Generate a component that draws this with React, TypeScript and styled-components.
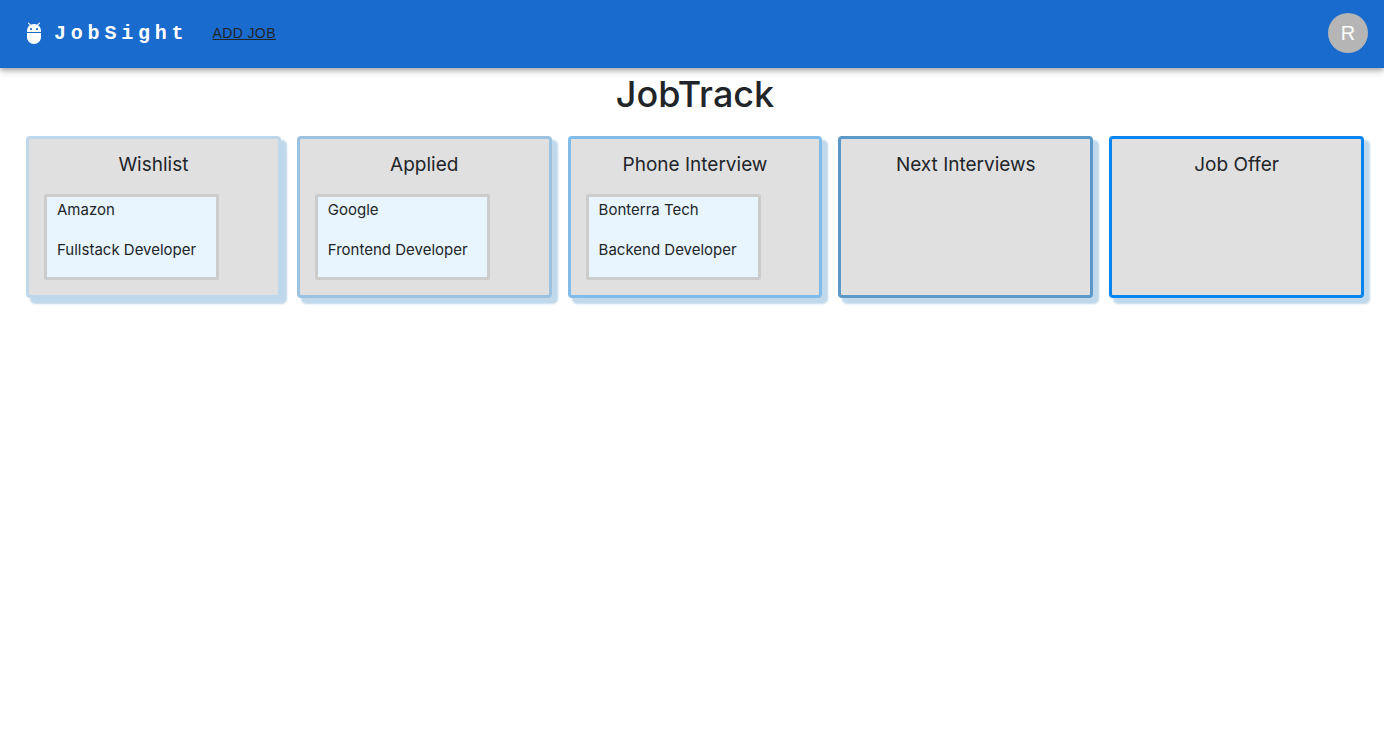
import React from "react";
import styled, { createGlobalStyle } from "styled-components";

const GlobalStyle = createGlobalStyle`
  *, *::before, *::after { box-sizing: border-box; }
  body {
    margin: 0;
    background: #fff;
    color: #212529;
    font-family: Inter, "Liberation Sans", sans-serif;
    font-size: 15px;
    line-height: 24px;
  }
`;

const AppBar = styled.header`
  position: relative;
  display: flex;
  align-items: center;
  height: 68px;
  padding: 0 16px 2px 22px;
  background: #196bcd;
  box-shadow: 0 2px 4px -1px rgba(0, 0, 0, 0.2), 0 4px 5px rgba(0, 0, 0, 0.14),
    0 1px 10px rgba(0, 0, 0, 0.12);
`;

const Brand = styled.a`
  display: flex;
  align-items: center;
  gap: 8px;
  color: #fff;
  font: 700 20px/32px "Liberation Mono", monospace;
  letter-spacing: 0.24em;
  text-decoration: none;
`;

const BrandName = styled.span`
  padding-top: 2px;
`;

const Nav = styled.nav`
  margin-left: 24px;
`;

const NavLink = styled.a`
  color: #212529;
  font: 400 14px/24px "Liberation Sans", sans-serif;
  letter-spacing: 0.02857em;
  text-transform: uppercase;
  text-decoration: underline;
`;

const Avatar = styled.button`
  width: 40px;
  height: 40px;
  margin-left: auto;
  padding: 0;
  border: 0;
  border-radius: 50%;
  background: #b5b5b5;
  color: #fff;
  font: 400 20px/38px "Liberation Sans", sans-serif;
  cursor: pointer;
`;

const Title = styled.h1`
  margin: 0;
  padding: 2px 0 0 6px;
  font-size: 36px;
  font-weight: 500;
  line-height: 48px;
  text-align: center;
`;

const Board = styled.main`
  display: grid;
  grid-template-columns: repeat(5, minmax(0, 1fr));
  gap: 16px;
  padding: 18px 20px 24px 26px;
`;

const Column = styled.section<{ $accent: string }>`
  min-height: 162px;
  padding: 14px 15px 15px;
  border: 3px solid ${({ $accent }) => $accent};
  border-radius: 4px;
  background: #e0e0e0;
  box-shadow: 5px 5px 2px 1px #c0d8eb;
`;

const ColumnTitle = styled.h2`
  margin: 0 0 17px;
  font-size: 19px;
  font-weight: 400;
  line-height: 24px;
  text-align: center;
`;

const JobCard = styled.article`
  display: flex;
  flex-direction: column;
  gap: 16px;
  width: 175px;
  padding: 1px 10px 15px;
  border: 3px solid #ccc;
  border-radius: 2px;
  background: #e8f5fe;
`;

const JobLine = styled.p`
  margin: 0;
  white-space: nowrap;
`;

type Job = { company: string; role: string };

const columns: { title: string; accent: string; jobs: Job[] }[] = [
  { title: "Wishlist", accent: "#bed7ea", jobs: [{ company: "Amazon", role: "Fullstack Developer" }] },
  { title: "Applied", accent: "#9bc3e1", jobs: [{ company: "Google", role: "Frontend Developer" }] },
  { title: "Phone Interview", accent: "#80bbe9", jobs: [{ company: "Bonterra Tech", role: "Backend Developer" }] },
  { title: "Next Interviews", accent: "#5a99c8", jobs: [] },
  { title: "Job Offer", accent: "#0884ee", jobs: [] },
];

const RobotIcon = () => (
  <svg width="24" height="24" viewBox="0 0 24 24" fill="currentColor" aria-hidden="true">
    <path d="M5 16c0 3.87 3.13 7 7 7s7-3.13 7-7v-4H5v4zM16.12 4.37l2.1-2.1-.82-.83-2.3 2.31C14.16 3.28 13.12 3 12 3s-2.16.28-3.09.75L6.6 1.44l-.82.83 2.1 2.1C6.14 5.64 5 7.68 5 10v1h14v-1c0-2.32-1.14-4.36-2.88-5.63zM9 9c-.55 0-1-.45-1-1s.45-1 1-1 1 .45 1 1-.45 1-1 1zm6 0c-.55 0-1-.45-1-1s.45-1 1-1 1 .45 1 1-.45 1-1 1z" />
  </svg>
);

export default function App() {
  return (
    <>
      <GlobalStyle />
      <AppBar>
        <Brand href="#">
          <RobotIcon />
          <BrandName>JobSight</BrandName>
        </Brand>
        <Nav>
          <NavLink href="#add">Add Job</NavLink>
        </Nav>
        <Avatar type="button">R</Avatar>
      </AppBar>
      <Title>JobTrack</Title>
      <Board>
        {columns.map(({ title, accent, jobs }) => (
          <Column key={title} $accent={accent}>
            <ColumnTitle>{title}</ColumnTitle>
            {jobs.map((job) => (
              <JobCard key={job.company}>
                <JobLine>{job.company}</JobLine>
                <JobLine>{job.role}</JobLine>
              </JobCard>
            ))}
          </Column>
        ))}
      </Board>
    </>
  );
}
